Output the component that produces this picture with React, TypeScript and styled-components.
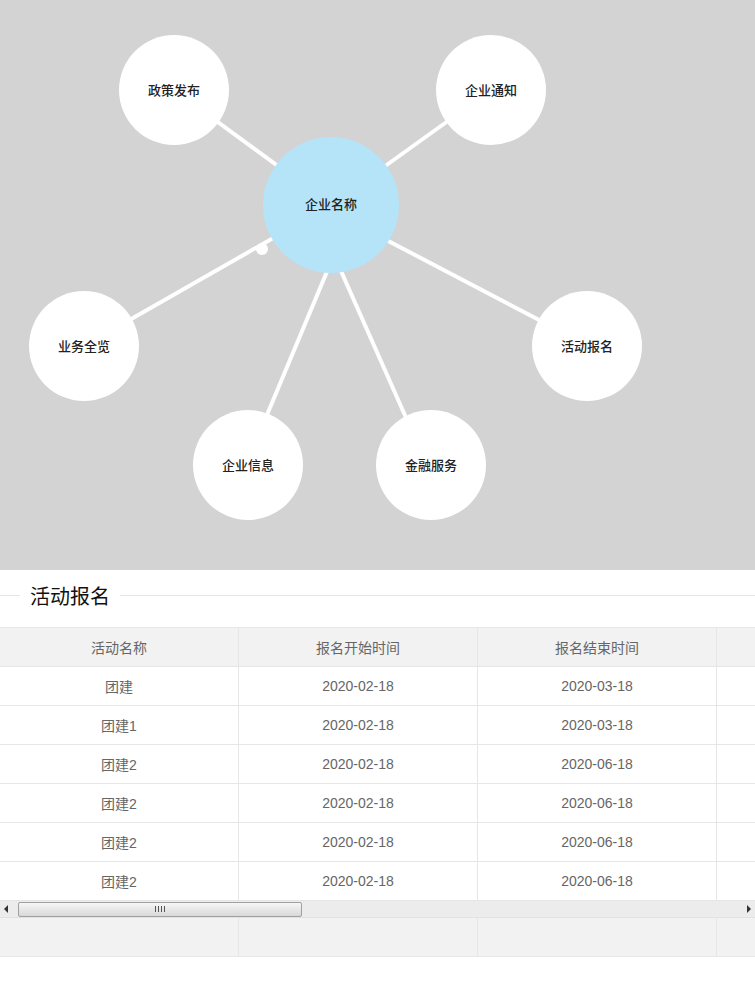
import React from 'react';
import styled, { createGlobalStyle } from 'styled-components';

const GlobalStyle = createGlobalStyle`
	html, body {
		margin: 0;
		padding: 0;
		background: #fff;
		font-family: 'Liberation Sans', 'Noto Sans CJK SC', sans-serif;
	}
`;

type NodeInfo = { label: string; x: number; y: number };
type Link = { x1: number; y1: number; x2: number; y2: number };

const CENTER = { x: 331, y: 205 };
const nodes: NodeInfo[] = [
	{ label: '政策发布', x: 174, y: 90 },
	{ label: '企业通知', x: 491, y: 90 },
	{ label: '业务全览', x: 84, y: 346 },
	{ label: '活动报名', x: 587, y: 346 },
	{ label: '企业信息', x: 248, y: 465 },
	{ label: '金融服务', x: 431, y: 465 },
];

const links: Link[] = [
	{ x1: 331, y1: 205, x2: 174, y2: 90 },
	{ x1: 331, y1: 205, x2: 491, y2: 90 },
	{ x1: 331, y1: 205, x2: 84, y2: 346 },
	{ x1: 331, y1: 211, x2: 587, y2: 345 },
	{ x1: 331, y1: 262, x2: 246, y2: 465 },
	{ x1: 337, y1: 262, x2: 427, y2: 465 },
];

const rows = [
	{ name: '团建', start: '2020-02-18', end: '2020-03-18' },
	{ name: '团建1', start: '2020-02-18', end: '2020-03-18' },
	{ name: '团建2', start: '2020-02-18', end: '2020-06-18' },
	{ name: '团建2', start: '2020-02-18', end: '2020-06-18' },
	{ name: '团建2', start: '2020-02-18', end: '2020-06-18' },
	{ name: '团建2', start: '2020-02-18', end: '2020-06-18' },
];

const Page = styled.div`
	width: 755px;
	overflow: hidden;
`;

const Graph = styled.div`
	position: relative;
	height: 570px;
	background: #d3d3d3;
	overflow: hidden;
`;

const Links = styled.svg`
	position: absolute;
	left: 0;
	top: 0;
`;

const Bubble = styled.div<{ $size: number; $main?: boolean }>`
	position: absolute;
	box-sizing: border-box;
	width: ${(p) => p.$size}px;
	height: ${(p) => p.$size}px;
	margin-left: ${(p) => -p.$size / 2}px;
	margin-top: ${(p) => -p.$size / 2}px;
	padding-bottom: ${(p) => (p.$main ? 3 : 2)}px;
	border-radius: 50%;
	background: ${(p) => (p.$main ? '#b5e4f9' : '#fff')};
	display: flex;
	align-items: center;
	justify-content: center;
	font-family: 'Noto Sans CJK SC', sans-serif;
	font-size: 13px;
	font-weight: 500;
	color: #222;
`;

const TitleBar = styled.div`
	display: flex;
	align-items: center;
	height: 50px;
	margin-bottom: 7px;
	&::before,
	&::after {
		content: '';
		height: 1px;
		background: #e6e6e6;
	}
	&::before {
		width: 20px;
	}
	&::after {
		flex: 1;
	}
`;

const Title = styled.h2`
	margin: 0;
	padding: 0 10px;
	font-family: 'Noto Sans CJK SC', sans-serif;
	font-size: 20px;
	font-weight: 400;
	color: #111;
`;

const TableWrap = styled.div`
	border-top: 1px solid #e6e6e6;
	border-bottom: 1px solid #e6e6e6;
`;

const Row = styled.div<{ $head?: boolean }>`
	display: grid;
	grid-template-columns: 239px 239px 239px 238px;
	height: 38px;
	border-bottom: 1px solid #e6e6e6;
	background: ${(p) => (p.$head ? '#f2f2f2' : '#fff')};
`;

const Cell = styled.div`
	display: flex;
	align-items: center;
	justify-content: center;
	padding-bottom: 1px;
	border-right: 1px solid #e6e6e6;
	font-size: 14px;
	color: #666;
	font-family: 'Liberation Sans', 'Noto Sans CJK SC', sans-serif;
`;

const Scrollbar = styled.div`
	display: flex;
	align-items: center;
	height: 16px;
	background: #ececec;
	border-bottom: 1px solid #e2e2e2;
	padding: 0 4px;
	gap: 4px;
`;

const Arrow = styled.div<{ $dir: 'left' | 'right' }>`
	width: 0;
	height: 0;
	border-top: 4px solid transparent;
	border-bottom: 4px solid transparent;
	${(p) =>
		p.$dir === 'left'
			? 'border-right: 4px solid #333; margin-right: 6px;'
			: 'border-left: 4px solid #333; margin-left: auto;'}
`;

const Thumb = styled.div`
	width: 282px;
	height: 13px;
	border: 1px solid #a0a0a0;
	border-radius: 2px;
	background: linear-gradient(#f6f6f6, #d8d8d8);
	display: flex;
	align-items: center;
	justify-content: center;
	gap: 2px;
`;

const Grip = styled.span`
	width: 1px;
	height: 6px;
	background: #555;
`;

const FootRow = styled(Row)`
	border-bottom: none;
	background: #f2f2f2;
`;

const App = (): JSX.Element => {
	return (
		<Page>
			<GlobalStyle />
			<Graph>
				<Links width={755} height={570}>
					{links.map((l, i) => (
						<line
							key={i}
							x1={l.x1}
							y1={l.y1}
							x2={l.x2}
							y2={l.y2}
							stroke="#fff"
							strokeWidth={4}
						/>
					))}
					<circle cx={262} cy={249} r={6} fill="#fff" />
				</Links>
				<Bubble $size={136} $main style={{ left: CENTER.x, top: CENTER.y }}>
					企业名称
				</Bubble>
				{nodes.map((n) => (
					<Bubble key={n.label} $size={110} style={{ left: n.x, top: n.y }}>
						{n.label}
					</Bubble>
				))}
			</Graph>
			<TitleBar>
				<Title>活动报名</Title>
			</TitleBar>
			<TableWrap>
				<Row $head>
					<Cell>活动名称</Cell>
					<Cell>报名开始时间</Cell>
					<Cell>报名结束时间</Cell>
					<Cell />
				</Row>
				{rows.map((r, i) => (
					<Row key={i}>
						<Cell>{r.name}</Cell>
						<Cell>{r.start}</Cell>
						<Cell>{r.end}</Cell>
						<Cell />
					</Row>
				))}
				<Scrollbar>
					<Arrow $dir="left" />
					<Thumb>
						<Grip />
						<Grip />
						<Grip />
						<Grip />
					</Thumb>
					<Arrow $dir="right" />
				</Scrollbar>
				<FootRow>
					<Cell />
					<Cell />
					<Cell />
					<Cell />
				</FootRow>
			</TableWrap>
		</Page>
	);
};

export default App;
